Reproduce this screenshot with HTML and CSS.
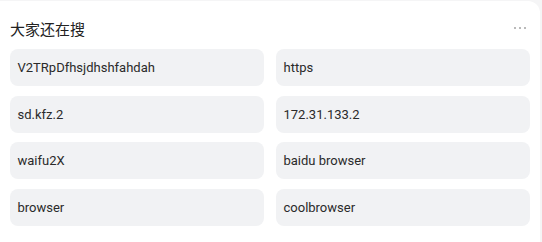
FILE: index.html
```html
<!DOCTYPE html>
<html lang="zh-CN">
  <head>
    <meta charset="UTF-8">
    <meta name="viewport" content="width=device-width, initial-scale=1.0">
    <title>大家还在搜</title>
    <link rel="stylesheet" href="styles.css">
  </head>

  <body>
    <div class="card">
      <div class="card-head">
        <h3 class="title">大家还在搜</h3>
        <svg class="more" width="14" height="4" viewBox="0 0 14 4">
          <circle cx="2" cy="2" r="1" fill="#a3a3a3"/>
          <circle cx="7" cy="2" r="1" fill="#a3a3a3"/>
          <circle cx="12" cy="2" r="1" fill="#a3a3a3"/>
        </svg>
      </div>
      <ul class="tags">
        <li>V2TRpDfhsjdhshfahdah</li>
        <li>https</li>
        <li>sd.kfz.2</li>
        <li>172.31.133.2</li>
        <li>waifu2X</li>
        <li>baidu browser</li>
        <li>browser</li>
        <li>coolbrowser</li>
      </ul>
    </div>
  </body>
</html>
```

FILE: styles.css
```css
* {
  margin: 0;
  padding: 0;
  box-sizing: border-box;
}

li {
  list-style: none;
}

html,
body {
  height: 100%;
  overflow: hidden;
}

body {
  background-color: #f5f5f6;
  font-family: Roboto, "Noto Sans CJK SC", sans-serif;
  color: #222;
}

.card {
  width: 540px;
  height: 241px;
  margin-top: 1px;
  padding: 10px;
  background-color: #fff;
  border-top-right-radius: 12px;
}

.card-head {
  height: 34px;
  display: flex;
  align-items: center;
  justify-content: space-between;
}

.title {
  font-size: 15px;
  font-weight: normal;
  font-family: "Noto Sans CJK SC", sans-serif;
  color: #222;
}

.more {
  display: block;
  margin-right: 3px;
}

.tags {
  margin-top: 4px;
  display: grid;
  grid-template-columns: 254px 254px;
  grid-auto-rows: 37px;
  column-gap: 12px;
  row-gap: 9.5px;
}

.tags li {
  display: flex;
  align-items: center;
  padding-left: 7.5px;
  background-color: #f1f2f4;
  border-radius: 8px;
  font-size: 13px;
  color: #2a2a2a;
  white-space: nowrap;
}
```
